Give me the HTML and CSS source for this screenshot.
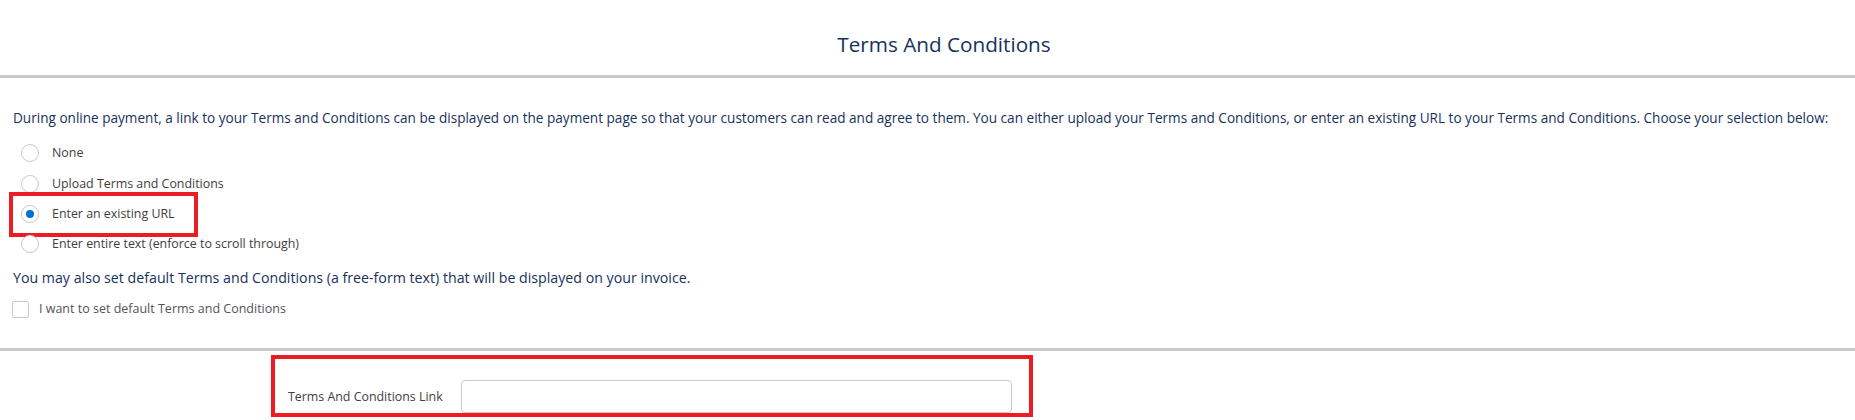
FILE: index.html
```html
<!DOCTYPE html>
<html lang="en">
<head>
<meta charset="utf-8">
<title>Terms And Conditions</title>
<link rel="stylesheet" href="styles.css">
</head>
<body>
<div class="page">
  <header class="page-header">
    <h1 class="page-title">Terms And Conditions</h1>
  </header>
  <section class="options">
    <p class="intro">During online payment, a link to your Terms and Conditions can be displayed on the payment page so that your customers can read and agree to them. You can either upload your Terms and Conditions, or enter an existing URL to your Terms and Conditions. Choose your selection below:</p>
    <div class="radio-list">
      <div class="radio"><span class="radio-circle"></span><span class="radio-label">None</span></div>
      <div class="radio"><span class="radio-circle"></span><span class="radio-label">Upload Terms and Conditions</span></div>
      <div class="radio is-checked is-marked"><span class="radio-circle"></span><span class="radio-label">Enter an existing URL</span></div>
      <div class="radio"><span class="radio-circle"></span><span class="radio-label">Enter entire text (enforce to scroll through)</span></div>
    </div>
    <p class="note">You may also set default Terms and Conditions (a free-form text) that will be displayed on your invoice.</p>
    <div class="checkbox"><span class="checkbox-box"></span><span class="checkbox-label">I want to set default Terms and Conditions</span></div>
  </section>
  <section class="link-section">
    <div class="link-field">
      <span class="link-label">Terms And Conditions Link</span>
      <div class="link-input"></div>
    </div>
  </section>
</div>
</body>
</html>
```
FILE: styles.css
```css
* { box-sizing: border-box; }
html, body { margin: 0; padding: 0; background: #ffffff; }
body {
  font-family: "Open Sans", "Noto Sans", Arial, sans-serif;
  font-size: 12.4px;
  color: #16325c;
}
.page { width: 1855px; height: 420px; overflow: hidden; }

.page-header {
  height: 78px;
  border-bottom: 3px solid #c9c9c9;
  display: flex;
  align-items: flex-start;
  justify-content: center;
  padding-left: 33px;
}
.page-title {
  margin: 30px 0 0;
  font-size: 20.7px;
  font-weight: 400;
  line-height: 28px;
  color: #16325c;
}

.options {
  padding: 31px 0 0 13px;
  height: 273px;
  border-bottom: 3px solid #c9c9c9;
}
.intro {
  margin: 0;
  font-size: 13.58px;
  line-height: 18px;
  white-space: nowrap;
  color: #16325c;
}
.radio-list {
  margin-top: 11px;
  display: flex;
  flex-direction: column;
}
.radio {
  position: relative;
  height: 30.4px;
  display: flex;
  align-items: center;
  margin-left: 8px;
  gap: 13px;
  align-self: flex-start;
}
.radio-circle {
  width: 18px;
  height: 18px;
  border: 1px solid #c9c9c9;
  border-radius: 50%;
  background: #fff;
  display: flex;
  align-items: center;
  justify-content: center;
}
.radio.is-checked .radio-circle::before {
  content: "";
  width: 8px;
  height: 8px;
  border-radius: 50%;
  background: #0070d2;
}
.radio-label { color: #3e3e3c; line-height: 18px; }
.radio.is-marked::after {
  content: "";
  position: absolute;
  left: -12px;
  top: -7px;
  width: 181px;
  height: 37px;
  border: 4px solid #ec1c24;
}

.note {
  margin: 9px 0 0;
  font-size: 14.2px;
  line-height: 18px;
  color: #16325c;
}
.checkbox {
  margin-top: 7px;
  height: 31px;
  display: flex;
  align-items: center;
  gap: 10px;
  margin-left: -1px;
}
.checkbox-box {
  width: 17px;
  height: 17px;
  border: 1px solid #c9c9c9;
  border-radius: 2px;
  background: #fff;
}
.checkbox-label { color: #54525a; line-height: 18px; font-size: 12.5px; }

.link-section { padding-top: 4px; }
.link-field {
  margin-left: 271px;
  width: 762px;
  height: 62px;
  border: 4px solid #ec1c24;
  display: flex;
  align-items: flex-end;
  padding: 0 17px 0 13px;
}
.link-label {
  color: #3e3e3c;
  line-height: 33px;
  flex: 1;
}
.link-input {
  width: 551px;
  height: 33px;
  border: 1px solid #c9c9c9;
  border-radius: 4px;
  background: #fff;
}
```
